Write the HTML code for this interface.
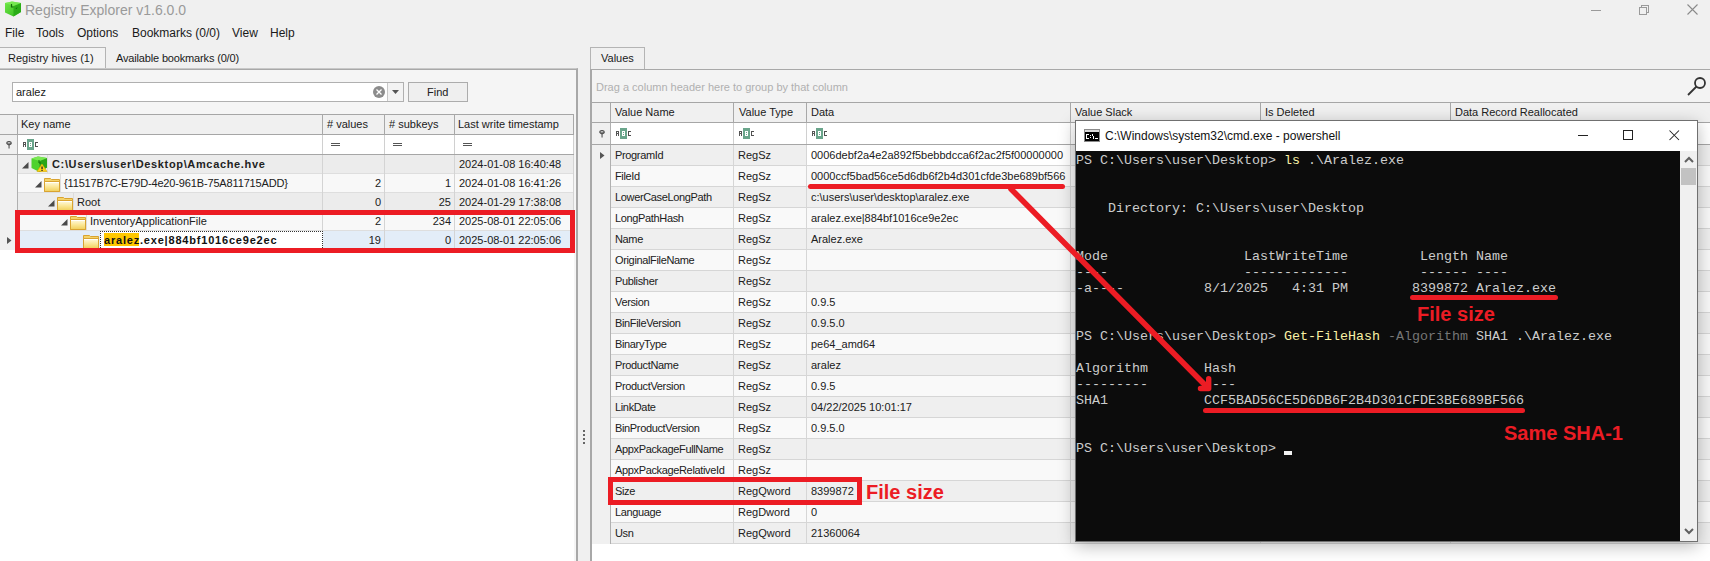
<!DOCTYPE html><html><head><meta charset="utf-8"><style>
*{margin:0;padding:0;box-sizing:border-box}
html,body{width:1710px;height:561px;overflow:hidden;background:#f0f0f0;font-family:"Liberation Sans",sans-serif;font-size:11px;color:#202020}
.ab{position:absolute}
.t{position:absolute;white-space:nowrap;line-height:1}
.m{position:absolute;white-space:pre;line-height:16px;font-family:"Liberation Mono",monospace;font-size:13.333px;color:#cccccc}
.hl{position:absolute;height:1px}
.vl{position:absolute;width:1px}
</style></head><body>
<svg class="ab" style="left:4px;top:0px" width="18" height="18" viewBox="0 0 18 18">
<defs><linearGradient id="gl" x1="0" y1="0" x2="1" y2="1"><stop offset="0" stop-color="#72e84a"/><stop offset="1" stop-color="#2fb81a"/></linearGradient></defs>
<polygon points="1,3 8,1.5 17,3 17,12 9.5,16.5 1,12.5" fill="url(#gl)"/>
<polygon points="9.5,6 17,3 17,12 9.5,16.5" fill="#27a815" opacity="0.85"/>
<polygon points="1,3 8,1.5 17,3 9.5,6" fill="#80ee5a" opacity="0.7"/>
<path d="M7.5 4 L7.5 7 L9.5 7" stroke="#136b0a" stroke-width="1.2" fill="none"/>
<path d="M13 7.5 L12 9" stroke="#136b0a" stroke-width="1" fill="none"/>
</svg>
<div class="t" style="left:25px;top:3px;font-size:14px;color:#9a9a9a">Registry Explorer v1.6.0.0</div>
<div class="ab" style="left:1591px;top:10px;width:10px;height:1px;background:#9a9a9a"></div>
<div class="ab" style="left:1641px;top:5px;width:8px;height:8px;border:1px solid #9a9a9a"></div>
<div class="ab" style="left:1639px;top:7px;width:8px;height:8px;border:1px solid #9a9a9a;background:#f0f0f0"></div>
<svg class="ab" style="left:1686px;top:3px" width="14" height="14"><path d="M1.5 1.5 L11.5 11.5 M11.5 1.5 L1.5 11.5" stroke="#8a8a8a" stroke-width="1.1"/></svg>
<div class="t" style="left:5px;top:27px;font-size:12px;color:#1a1a1a">File</div>
<div class="t" style="left:36px;top:27px;font-size:12px;color:#1a1a1a">Tools</div>
<div class="t" style="left:77px;top:27px;font-size:12px;color:#1a1a1a">Options</div>
<div class="t" style="left:132px;top:27px;font-size:12px;color:#1a1a1a">Bookmarks (0/0)</div>
<div class="t" style="left:232px;top:27px;font-size:12px;color:#1a1a1a">View</div>
<div class="t" style="left:270px;top:27px;font-size:12px;color:#1a1a1a">Help</div>
<div class="ab" style="left:0px;top:47px;width:106px;height:23px;background:#f3f3f3;border-top:1px solid #b4b4b4;border-right:1px solid #b4b4b4"></div>
<div class="t" style="left:8px;top:53px;color:#1a1a1a">Registry hives (1)</div>
<div class="t" style="left:116px;top:53px;color:#1a1a1a;letter-spacing:-0.16px">Available bookmarks (0/0)</div>
<div class="ab" style="left:0px;top:68px;width:578px;height:493px;background:#f5f5f5;border-top:1px solid #c8c8c8;border-right:2px solid #a8a8a8"></div>
<div class="ab" style="left:0px;top:69px;width:576px;height:1px;background:#a8a8a8"></div>
<div class="ab" style="left:12px;top:82px;width:392px;height:20px;background:#fff;border:1px solid #b0b0b0"></div>
<div class="ab" style="left:387px;top:83px;width:1px;height:18px;background:#c8c8c8"></div>
<div class="ab" style="left:388px;top:83px;width:15px;height:18px;background:#f3f3f3"></div>
<svg class="ab" style="left:372px;top:85px" width="14" height="14"><circle cx="7" cy="7" r="6" fill="#8c8c8c"/><path d="M4.5 4.5 L9.5 9.5 M9.5 4.5 L4.5 9.5" stroke="#fff" stroke-width="1.3"/></svg>
<svg class="ab" style="left:392px;top:90px" width="7" height="5"><polygon points="0,0 7,0 3.5,4" fill="#555"/></svg>
<div class="t" style="left:16px;top:87px;color:#202020">aralez</div>
<div class="ab" style="left:408px;top:82px;width:60px;height:20px;background:#efefef;border:1px solid #acacac"></div>
<div class="t" style="left:427px;top:87px;color:#202020">Find</div>
<div class="ab" style="left:0px;top:114px;width:574px;height:21px;background:#f0f0f0;border-top:1px solid #a6a6a6;border-bottom:1px solid #a6a6a6"></div>
<div class="ab" style="left:0px;top:135px;width:574px;height:20px;background:#fff;border-bottom:1px solid #a6a6a6"></div>
<div class="ab" style="left:0px;top:135px;width:17px;height:19px;background:#f0f0f0"></div>
<div class="ab" style="left:0px;top:155px;width:574px;height:406px;background:#fff"></div>
<div class="ab" style="left:0px;top:155px;width:17px;height:95px;background:#f0f0f0"></div>
<div class="ab" style="left:17px;top:114px;width:1px;height:21px;background:#a8a8a8"></div>
<div class="ab" style="left:17px;top:135px;width:1px;height:19px;background:#d0d0d0"></div>
<div class="ab" style="left:322px;top:114px;width:1px;height:21px;background:#a8a8a8"></div>
<div class="ab" style="left:322px;top:135px;width:1px;height:19px;background:#d0d0d0"></div>
<div class="ab" style="left:384px;top:114px;width:1px;height:21px;background:#a8a8a8"></div>
<div class="ab" style="left:384px;top:135px;width:1px;height:19px;background:#d0d0d0"></div>
<div class="ab" style="left:454px;top:114px;width:1px;height:21px;background:#a8a8a8"></div>
<div class="ab" style="left:454px;top:135px;width:1px;height:19px;background:#d0d0d0"></div>
<div class="ab" style="left:573px;top:114px;width:1px;height:21px;background:#a8a8a8"></div>
<div class="ab" style="left:573px;top:135px;width:1px;height:19px;background:#d0d0d0"></div>
<div class="ab" style="left:17px;top:135px;width:1px;height:19px;background:#b0b0b0"></div>
<div class="ab" style="left:17px;top:155px;width:1px;height:95px;background:#b0b0b0"></div>
<div class="t" style="left:21px;top:119px;color:#202020">Key name</div>
<div class="t" style="left:327px;top:119px;color:#202020"># values</div>
<div class="t" style="left:389px;top:119px;color:#202020"># subkeys</div>
<div class="t" style="left:458px;top:119px;color:#202020">Last write timestamp</div>
<svg class="ab" style="left:6px;top:141px" width="7" height="8"><ellipse cx="3" cy="2" rx="2.2" ry="1.4" fill="none" stroke="#555" stroke-width="1.3"/><path d="M0.8 2.5 L3 4.8 L5.2 2.5" fill="#555"/><rect x="2.5" y="4" width="1.1" height="3.5" fill="#555"/></svg>
<svg class="ab" style="left:23px;top:139px" width="16" height="11" shape-rendering="crispEdges"><path d="M0 3h3v1h-3zM0 4h1v4h-1zM2 4h1v4h-1zM1 5h1v1h-1z" fill="#555"/><rect x="4" y="0" width="7" height="11" fill="#6aa58b"/><rect x="6" y="3" width="3" height="5" fill="#fff"/><rect x="7" y="4" width="1" height="1" fill="#6aa58b"/><rect x="7" y="6" width="1" height="1" fill="#6aa58b"/><path d="M12 3h3v1h-3zM12 4h1v3h-1zM12 7h3v1h-3z" fill="#505050"/></svg>
<svg class="ab" style="left:331px;top:143px" width="9" height="4" shape-rendering="crispEdges"><rect x="0" y="0" width="9" height="1" fill="#555"/><rect x="0" y="2" width="9" height="1" fill="#555"/></svg>
<svg class="ab" style="left:393px;top:143px" width="9" height="4" shape-rendering="crispEdges"><rect x="0" y="0" width="9" height="1" fill="#555"/><rect x="0" y="2" width="9" height="1" fill="#555"/></svg>
<svg class="ab" style="left:463px;top:143px" width="9" height="4" shape-rendering="crispEdges"><rect x="0" y="0" width="9" height="1" fill="#555"/><rect x="0" y="2" width="9" height="1" fill="#555"/></svg>
<div class="ab" style="left:18px;top:155px;width:556px;height:19px;background:#ececec"></div>
<div class="ab" style="left:18px;top:173px;width:556px;height:1px;background:#dedede"></div>
<div class="ab" style="left:322px;top:155px;width:1px;height:19px;background:#d4d4d4"></div>
<div class="ab" style="left:384px;top:155px;width:1px;height:19px;background:#d4d4d4"></div>
<div class="ab" style="left:454px;top:155px;width:1px;height:19px;background:#d4d4d4"></div>
<div class="ab" style="left:573px;top:155px;width:1px;height:19px;background:#d4d4d4"></div>
<svg class="ab" style="left:22px;top:162px" width="7" height="7"><polygon points="6.5,0 6.5,6.5 0,6.5" fill="#4a4a4a"/></svg>
<div class="ab" style="left:47px;top:155px;width:1px;height:18px;background:#dcdcdc"></div>
<svg class="ab" style="left:31px;top:156px" width="17" height="17" viewBox="0 0 17 17"><polygon points="0.5,2.5 7,0.5 16,2 16,11.5 8.5,16 0.5,12" fill="#4fd22e"/><polygon points="8.5,5 16,2 16,11.5 8.5,16" fill="#2aa516"/><polygon points="0.5,2.5 7,0.5 16,2 8.5,5" fill="#7ae852"/><path d="M8 4 L8 7 L10 7" stroke="#136b0a" stroke-width="1" fill="none"/><polygon points="11,8 16,15.5 6,15.5" fill="#ffd21a" stroke="#d9a800" stroke-width="0.6"/><rect x="10.4" y="10.5" width="1.3" height="2.8" fill="#222"/><rect x="10.4" y="14" width="1.3" height="1" fill="#222"/></svg>
<div class="t" style="left:52px;top:159px;font-weight:bold;letter-spacing:0.65px;color:#222">C:\Users\user\Desktop\Amcache.hve</div>
<div class="t" style="left:459px;top:159px;color:#202020">2024-01-08 16:40:48</div>
<div class="ab" style="left:18px;top:174px;width:556px;height:19px;background:#f8f8f8"></div>
<div class="ab" style="left:18px;top:192px;width:556px;height:1px;background:#dedede"></div>
<div class="ab" style="left:322px;top:174px;width:1px;height:19px;background:#d4d4d4"></div>
<div class="ab" style="left:384px;top:174px;width:1px;height:19px;background:#d4d4d4"></div>
<div class="ab" style="left:454px;top:174px;width:1px;height:19px;background:#d4d4d4"></div>
<div class="ab" style="left:573px;top:174px;width:1px;height:19px;background:#d4d4d4"></div>
<svg class="ab" style="left:35px;top:181px" width="7" height="7"><polygon points="6.5,0 6.5,6.5 0,6.5" fill="#4a4a4a"/></svg>
<div class="ab" style="left:60px;top:174px;width:1px;height:18px;background:#dcdcdc"></div>
<svg class="ab" style="left:44px;top:178px" width="17" height="14" viewBox="0 0 17 14"><defs><linearGradient id="fg44" x1="0" y1="0" x2="0" y2="1"><stop offset="0" stop-color="#fffbe6"/><stop offset="0.5" stop-color="#fbe89a"/><stop offset="1" stop-color="#f0cf5a"/></linearGradient></defs><path d="M0.5 0.5 H6.5 L7.5 1.5 H15.5 V13.5 H0.5 Z" fill="#f4d36a" stroke="#d9a331"/><path d="M0.5 3.5 H15.5 V13.5 H0.5 Z" fill="url(#fg44)" stroke="#d9a331"/><rect x="1" y="4" width="14" height="1" fill="#ffffff" opacity="0.9"/></svg>
<div class="t" style="left:64px;top:178px;color:#202020;letter-spacing:-0.15px">{11517B7C-E79D-4e20-961B-75A811715ADD}</div>
<div class="t" style="left:322px;top:178px;width:59px;text-align:right;color:#202020">2</div>
<div class="t" style="left:384px;top:178px;width:67px;text-align:right;color:#202020">1</div>
<div class="t" style="left:459px;top:178px;color:#202020">2024-01-08 16:41:26</div>
<div class="ab" style="left:18px;top:193px;width:556px;height:19px;background:#ececec"></div>
<div class="ab" style="left:18px;top:211px;width:556px;height:1px;background:#dedede"></div>
<div class="ab" style="left:322px;top:193px;width:1px;height:19px;background:#d4d4d4"></div>
<div class="ab" style="left:384px;top:193px;width:1px;height:19px;background:#d4d4d4"></div>
<div class="ab" style="left:454px;top:193px;width:1px;height:19px;background:#d4d4d4"></div>
<div class="ab" style="left:573px;top:193px;width:1px;height:19px;background:#d4d4d4"></div>
<svg class="ab" style="left:48px;top:200px" width="7" height="7"><polygon points="6.5,0 6.5,6.5 0,6.5" fill="#4a4a4a"/></svg>
<div class="ab" style="left:73px;top:193px;width:1px;height:18px;background:#dcdcdc"></div>
<svg class="ab" style="left:57px;top:197px" width="17" height="14" viewBox="0 0 17 14"><defs><linearGradient id="fg57" x1="0" y1="0" x2="0" y2="1"><stop offset="0" stop-color="#fffbe6"/><stop offset="0.5" stop-color="#fbe89a"/><stop offset="1" stop-color="#f0cf5a"/></linearGradient></defs><path d="M0.5 0.5 H6.5 L7.5 1.5 H15.5 V13.5 H0.5 Z" fill="#f4d36a" stroke="#d9a331"/><path d="M0.5 3.5 H15.5 V13.5 H0.5 Z" fill="url(#fg57)" stroke="#d9a331"/><rect x="1" y="4" width="14" height="1" fill="#ffffff" opacity="0.9"/></svg>
<div class="t" style="left:77px;top:197px;color:#202020">Root</div>
<div class="t" style="left:322px;top:197px;width:59px;text-align:right;color:#202020">0</div>
<div class="t" style="left:384px;top:197px;width:67px;text-align:right;color:#202020">25</div>
<div class="t" style="left:459px;top:197px;color:#202020">2024-01-29 17:38:08</div>
<div class="ab" style="left:18px;top:212px;width:556px;height:19px;background:#f8f8f8"></div>
<div class="ab" style="left:18px;top:230px;width:556px;height:1px;background:#dedede"></div>
<div class="ab" style="left:322px;top:212px;width:1px;height:19px;background:#d4d4d4"></div>
<div class="ab" style="left:384px;top:212px;width:1px;height:19px;background:#d4d4d4"></div>
<div class="ab" style="left:454px;top:212px;width:1px;height:19px;background:#d4d4d4"></div>
<div class="ab" style="left:573px;top:212px;width:1px;height:19px;background:#d4d4d4"></div>
<svg class="ab" style="left:61px;top:219px" width="7" height="7"><polygon points="6.5,0 6.5,6.5 0,6.5" fill="#4a4a4a"/></svg>
<div class="ab" style="left:86px;top:212px;width:1px;height:18px;background:#dcdcdc"></div>
<svg class="ab" style="left:70px;top:216px" width="17" height="14" viewBox="0 0 17 14"><defs><linearGradient id="fg70" x1="0" y1="0" x2="0" y2="1"><stop offset="0" stop-color="#fffbe6"/><stop offset="0.5" stop-color="#fbe89a"/><stop offset="1" stop-color="#f0cf5a"/></linearGradient></defs><path d="M0.5 0.5 H6.5 L7.5 1.5 H15.5 V13.5 H0.5 Z" fill="#f4d36a" stroke="#d9a331"/><path d="M0.5 3.5 H15.5 V13.5 H0.5 Z" fill="url(#fg70)" stroke="#d9a331"/><rect x="1" y="4" width="14" height="1" fill="#ffffff" opacity="0.9"/></svg>
<div class="t" style="left:90px;top:216px;color:#202020">InventoryApplicationFile</div>
<div class="t" style="left:322px;top:216px;width:59px;text-align:right;color:#202020">2</div>
<div class="t" style="left:384px;top:216px;width:67px;text-align:right;color:#202020">234</div>
<div class="t" style="left:459px;top:216px;color:#202020">2025-08-01 22:05:06</div>
<div class="ab" style="left:18px;top:231px;width:556px;height:19px;background:#e3edf8"></div>
<div class="ab" style="left:18px;top:249px;width:556px;height:1px;background:#dedede"></div>
<div class="ab" style="left:322px;top:231px;width:1px;height:19px;background:#d4d4d4"></div>
<div class="ab" style="left:384px;top:231px;width:1px;height:19px;background:#d4d4d4"></div>
<div class="ab" style="left:454px;top:231px;width:1px;height:19px;background:#d4d4d4"></div>
<div class="ab" style="left:573px;top:231px;width:1px;height:19px;background:#d4d4d4"></div>
<svg class="ab" style="left:83px;top:235px" width="17" height="14" viewBox="0 0 17 14"><defs><linearGradient id="fg83" x1="0" y1="0" x2="0" y2="1"><stop offset="0" stop-color="#fffbe6"/><stop offset="0.5" stop-color="#fbe89a"/><stop offset="1" stop-color="#f0cf5a"/></linearGradient></defs><path d="M0.5 0.5 H6.5 L7.5 1.5 H15.5 V13.5 H0.5 Z" fill="#f4d36a" stroke="#d9a331"/><path d="M0.5 3.5 H15.5 V13.5 H0.5 Z" fill="url(#fg83)" stroke="#d9a331"/><rect x="1" y="4" width="14" height="1" fill="#ffffff" opacity="0.9"/></svg>
<div class="ab" style="left:100px;top:231px;width:223px;height:19px;background:#fff;border:1px dotted #333"></div>
<div class="ab" style="left:104px;top:233px;width:35px;height:13px;background:#ffc800"></div>
<div class="t" style="left:104px;top:235px;font-weight:bold;letter-spacing:0.8px;color:#111">aralez.exe|884bf1016ce9e2ec</div>
<div class="t" style="left:322px;top:235px;width:59px;text-align:right;color:#202020">19</div>
<div class="t" style="left:384px;top:235px;width:67px;text-align:right;color:#202020">0</div>
<div class="t" style="left:459px;top:235px;color:#202020">2025-08-01 22:05:06</div>
<svg class="ab" style="left:7px;top:237px" width="5" height="8"><polygon points="0,0 4.5,3.5 0,7" fill="#555"/></svg>
<div class="ab" style="left:583px;top:430px;width:2px;height:2px;background:#666"></div>
<div class="ab" style="left:583px;top:434px;width:2px;height:2px;background:#666"></div>
<div class="ab" style="left:583px;top:438px;width:2px;height:2px;background:#666"></div>
<div class="ab" style="left:583px;top:442px;width:2px;height:2px;background:#666"></div>
<div class="ab" style="left:590px;top:47px;width:55px;height:23px;background:#f0f0f0;border-top:1px solid #b4b4b4;border-left:1px solid #b4b4b4;border-right:1px solid #b4b4b4"></div>
<div class="t" style="left:601px;top:53px;color:#1a1a1a">Values</div>
<div class="ab" style="left:590px;top:69px;width:1120px;height:492px;background:#fff;border-top:1px solid #a8a8a8;border-left:2px solid #a8a8a8"></div>
<div class="ab" style="left:592px;top:70px;width:1118px;height:33px;background:#f3f3f3;border-bottom:1px solid #a6a6a6"></div>
<div class="t" style="left:596px;top:82px;color:#b0b0b0">Drag a column header here to group by that column</div>
<svg class="ab" style="left:1685px;top:75px" width="22" height="22"><circle cx="15" cy="8" r="5" fill="none" stroke="#333" stroke-width="1.8"/><path d="M11.5 11.5 L3 20" stroke="#333" stroke-width="1.8"/></svg>
<div class="ab" style="left:592px;top:103px;width:1118px;height:20px;background:#f0f0f0;border-bottom:1px solid #a6a6a6"></div>
<div class="ab" style="left:592px;top:123px;width:1118px;height:22px;background:#fff;border-bottom:1px solid #a6a6a6"></div>
<div class="ab" style="left:592px;top:123px;width:18px;height:21px;background:#f0f0f0"></div>
<div class="ab" style="left:610px;top:103px;width:1px;height:20px;background:#a8a8a8"></div>
<div class="ab" style="left:610px;top:123px;width:1px;height:21px;background:#d0d0d0"></div>
<div class="ab" style="left:733px;top:103px;width:1px;height:20px;background:#a8a8a8"></div>
<div class="ab" style="left:733px;top:123px;width:1px;height:21px;background:#d0d0d0"></div>
<div class="ab" style="left:806px;top:103px;width:1px;height:20px;background:#a8a8a8"></div>
<div class="ab" style="left:806px;top:123px;width:1px;height:21px;background:#d0d0d0"></div>
<div class="ab" style="left:1070px;top:103px;width:1px;height:20px;background:#a8a8a8"></div>
<div class="ab" style="left:1070px;top:123px;width:1px;height:21px;background:#d0d0d0"></div>
<div class="ab" style="left:1260px;top:103px;width:1px;height:20px;background:#a8a8a8"></div>
<div class="ab" style="left:1260px;top:123px;width:1px;height:21px;background:#d0d0d0"></div>
<div class="ab" style="left:1450px;top:103px;width:1px;height:20px;background:#a8a8a8"></div>
<div class="ab" style="left:1450px;top:123px;width:1px;height:21px;background:#d0d0d0"></div>
<div class="ab" style="left:610px;top:123px;width:1px;height:21px;background:#b0b0b0"></div>
<div class="t" style="left:615px;top:107px;color:#202020">Value Name</div>
<div class="t" style="left:739px;top:107px;color:#202020">Value Type</div>
<div class="t" style="left:811px;top:107px;color:#202020">Data</div>
<div class="t" style="left:1075px;top:107px;color:#202020">Value Slack</div>
<div class="t" style="left:1265px;top:107px;color:#202020">Is Deleted</div>
<div class="t" style="left:1455px;top:107px;color:#202020">Data Record Reallocated</div>
<svg class="ab" style="left:599px;top:130px" width="7" height="8"><ellipse cx="3" cy="2" rx="2.2" ry="1.4" fill="none" stroke="#555" stroke-width="1.3"/><path d="M0.8 2.5 L3 4.8 L5.2 2.5" fill="#555"/><rect x="2.5" y="4" width="1.1" height="3.5" fill="#555"/></svg>
<svg class="ab" style="left:616px;top:128px" width="16" height="11" shape-rendering="crispEdges"><path d="M0 3h3v1h-3zM0 4h1v4h-1zM2 4h1v4h-1zM1 5h1v1h-1z" fill="#555"/><rect x="4" y="0" width="7" height="11" fill="#6aa58b"/><rect x="6" y="3" width="3" height="5" fill="#fff"/><rect x="7" y="4" width="1" height="1" fill="#6aa58b"/><rect x="7" y="6" width="1" height="1" fill="#6aa58b"/><path d="M12 3h3v1h-3zM12 4h1v3h-1zM12 7h3v1h-3z" fill="#505050"/></svg>
<svg class="ab" style="left:739px;top:128px" width="16" height="11" shape-rendering="crispEdges"><path d="M0 3h3v1h-3zM0 4h1v4h-1zM2 4h1v4h-1zM1 5h1v1h-1z" fill="#555"/><rect x="4" y="0" width="7" height="11" fill="#6aa58b"/><rect x="6" y="3" width="3" height="5" fill="#fff"/><rect x="7" y="4" width="1" height="1" fill="#6aa58b"/><rect x="7" y="6" width="1" height="1" fill="#6aa58b"/><path d="M12 3h3v1h-3zM12 4h1v3h-1zM12 7h3v1h-3z" fill="#505050"/></svg>
<svg class="ab" style="left:812px;top:128px" width="16" height="11" shape-rendering="crispEdges"><path d="M0 3h3v1h-3zM0 4h1v4h-1zM2 4h1v4h-1zM1 5h1v1h-1z" fill="#555"/><rect x="4" y="0" width="7" height="11" fill="#6aa58b"/><rect x="6" y="3" width="3" height="5" fill="#fff"/><rect x="7" y="4" width="1" height="1" fill="#6aa58b"/><rect x="7" y="6" width="1" height="1" fill="#6aa58b"/><path d="M12 3h3v1h-3zM12 4h1v3h-1zM12 7h3v1h-3z" fill="#505050"/></svg>
<div class="ab" style="left:592px;top:145px;width:18px;height:399px;background:#f0f0f0"></div>
<div class="ab" style="left:611px;top:145px;width:1099px;height:21px;background:#efefef"></div>
<div class="ab" style="left:807px;top:145px;width:263px;height:21px;background:#fff"></div>
<div class="ab" style="left:611px;top:165px;width:1099px;height:1px;background:#d6d6d6"></div>
<div class="ab" style="left:733px;top:145px;width:1px;height:21px;background:#d6d6d6"></div>
<div class="ab" style="left:806px;top:145px;width:1px;height:21px;background:#d6d6d6"></div>
<div class="ab" style="left:1070px;top:145px;width:1px;height:21px;background:#d6d6d6"></div>
<div class="ab" style="left:1260px;top:145px;width:1px;height:21px;background:#d6d6d6"></div>
<div class="ab" style="left:1450px;top:145px;width:1px;height:21px;background:#d6d6d6"></div>
<div class="t" style="left:615px;top:150px;color:#202020;letter-spacing:-0.35px">ProgramId</div>
<div class="t" style="left:738px;top:150px;color:#202020">RegSz</div>
<div class="t" style="left:811px;top:150px;color:#202020">0006debf2a4e2a892f5bebbdcca6f2ac2f5f00000000</div>
<div class="ab" style="left:611px;top:166px;width:1099px;height:21px;background:#f9f9f9"></div>
<div class="ab" style="left:611px;top:186px;width:1099px;height:1px;background:#d6d6d6"></div>
<div class="ab" style="left:733px;top:166px;width:1px;height:21px;background:#d6d6d6"></div>
<div class="ab" style="left:806px;top:166px;width:1px;height:21px;background:#d6d6d6"></div>
<div class="ab" style="left:1070px;top:166px;width:1px;height:21px;background:#d6d6d6"></div>
<div class="ab" style="left:1260px;top:166px;width:1px;height:21px;background:#d6d6d6"></div>
<div class="ab" style="left:1450px;top:166px;width:1px;height:21px;background:#d6d6d6"></div>
<div class="t" style="left:615px;top:171px;color:#202020;letter-spacing:-0.35px">FileId</div>
<div class="t" style="left:738px;top:171px;color:#202020">RegSz</div>
<div class="t" style="left:811px;top:171px;color:#202020">0000ccf5bad56ce5d6db6f2b4d301cfde3be689bf566</div>
<div class="ab" style="left:611px;top:187px;width:1099px;height:21px;background:#efefef"></div>
<div class="ab" style="left:611px;top:207px;width:1099px;height:1px;background:#d6d6d6"></div>
<div class="ab" style="left:733px;top:187px;width:1px;height:21px;background:#d6d6d6"></div>
<div class="ab" style="left:806px;top:187px;width:1px;height:21px;background:#d6d6d6"></div>
<div class="ab" style="left:1070px;top:187px;width:1px;height:21px;background:#d6d6d6"></div>
<div class="ab" style="left:1260px;top:187px;width:1px;height:21px;background:#d6d6d6"></div>
<div class="ab" style="left:1450px;top:187px;width:1px;height:21px;background:#d6d6d6"></div>
<div class="t" style="left:615px;top:192px;color:#202020;letter-spacing:-0.35px">LowerCaseLongPath</div>
<div class="t" style="left:738px;top:192px;color:#202020">RegSz</div>
<div class="t" style="left:811px;top:192px;color:#202020">c:\users\user\desktop\aralez.exe</div>
<div class="ab" style="left:611px;top:208px;width:1099px;height:21px;background:#f9f9f9"></div>
<div class="ab" style="left:611px;top:228px;width:1099px;height:1px;background:#d6d6d6"></div>
<div class="ab" style="left:733px;top:208px;width:1px;height:21px;background:#d6d6d6"></div>
<div class="ab" style="left:806px;top:208px;width:1px;height:21px;background:#d6d6d6"></div>
<div class="ab" style="left:1070px;top:208px;width:1px;height:21px;background:#d6d6d6"></div>
<div class="ab" style="left:1260px;top:208px;width:1px;height:21px;background:#d6d6d6"></div>
<div class="ab" style="left:1450px;top:208px;width:1px;height:21px;background:#d6d6d6"></div>
<div class="t" style="left:615px;top:213px;color:#202020;letter-spacing:-0.35px">LongPathHash</div>
<div class="t" style="left:738px;top:213px;color:#202020">RegSz</div>
<div class="t" style="left:811px;top:213px;color:#202020">aralez.exe|884bf1016ce9e2ec</div>
<div class="ab" style="left:611px;top:229px;width:1099px;height:21px;background:#efefef"></div>
<div class="ab" style="left:611px;top:249px;width:1099px;height:1px;background:#d6d6d6"></div>
<div class="ab" style="left:733px;top:229px;width:1px;height:21px;background:#d6d6d6"></div>
<div class="ab" style="left:806px;top:229px;width:1px;height:21px;background:#d6d6d6"></div>
<div class="ab" style="left:1070px;top:229px;width:1px;height:21px;background:#d6d6d6"></div>
<div class="ab" style="left:1260px;top:229px;width:1px;height:21px;background:#d6d6d6"></div>
<div class="ab" style="left:1450px;top:229px;width:1px;height:21px;background:#d6d6d6"></div>
<div class="t" style="left:615px;top:234px;color:#202020;letter-spacing:-0.35px">Name</div>
<div class="t" style="left:738px;top:234px;color:#202020">RegSz</div>
<div class="t" style="left:811px;top:234px;color:#202020">Aralez.exe</div>
<div class="ab" style="left:611px;top:250px;width:1099px;height:21px;background:#f9f9f9"></div>
<div class="ab" style="left:611px;top:270px;width:1099px;height:1px;background:#d6d6d6"></div>
<div class="ab" style="left:733px;top:250px;width:1px;height:21px;background:#d6d6d6"></div>
<div class="ab" style="left:806px;top:250px;width:1px;height:21px;background:#d6d6d6"></div>
<div class="ab" style="left:1070px;top:250px;width:1px;height:21px;background:#d6d6d6"></div>
<div class="ab" style="left:1260px;top:250px;width:1px;height:21px;background:#d6d6d6"></div>
<div class="ab" style="left:1450px;top:250px;width:1px;height:21px;background:#d6d6d6"></div>
<div class="t" style="left:615px;top:255px;color:#202020;letter-spacing:-0.35px">OriginalFileName</div>
<div class="t" style="left:738px;top:255px;color:#202020">RegSz</div>
<div class="t" style="left:811px;top:255px;color:#202020"></div>
<div class="ab" style="left:611px;top:271px;width:1099px;height:21px;background:#efefef"></div>
<div class="ab" style="left:611px;top:291px;width:1099px;height:1px;background:#d6d6d6"></div>
<div class="ab" style="left:733px;top:271px;width:1px;height:21px;background:#d6d6d6"></div>
<div class="ab" style="left:806px;top:271px;width:1px;height:21px;background:#d6d6d6"></div>
<div class="ab" style="left:1070px;top:271px;width:1px;height:21px;background:#d6d6d6"></div>
<div class="ab" style="left:1260px;top:271px;width:1px;height:21px;background:#d6d6d6"></div>
<div class="ab" style="left:1450px;top:271px;width:1px;height:21px;background:#d6d6d6"></div>
<div class="t" style="left:615px;top:276px;color:#202020;letter-spacing:-0.35px">Publisher</div>
<div class="t" style="left:738px;top:276px;color:#202020">RegSz</div>
<div class="t" style="left:811px;top:276px;color:#202020"></div>
<div class="ab" style="left:611px;top:292px;width:1099px;height:21px;background:#f9f9f9"></div>
<div class="ab" style="left:611px;top:312px;width:1099px;height:1px;background:#d6d6d6"></div>
<div class="ab" style="left:733px;top:292px;width:1px;height:21px;background:#d6d6d6"></div>
<div class="ab" style="left:806px;top:292px;width:1px;height:21px;background:#d6d6d6"></div>
<div class="ab" style="left:1070px;top:292px;width:1px;height:21px;background:#d6d6d6"></div>
<div class="ab" style="left:1260px;top:292px;width:1px;height:21px;background:#d6d6d6"></div>
<div class="ab" style="left:1450px;top:292px;width:1px;height:21px;background:#d6d6d6"></div>
<div class="t" style="left:615px;top:297px;color:#202020;letter-spacing:-0.35px">Version</div>
<div class="t" style="left:738px;top:297px;color:#202020">RegSz</div>
<div class="t" style="left:811px;top:297px;color:#202020">0.9.5</div>
<div class="ab" style="left:611px;top:313px;width:1099px;height:21px;background:#efefef"></div>
<div class="ab" style="left:611px;top:333px;width:1099px;height:1px;background:#d6d6d6"></div>
<div class="ab" style="left:733px;top:313px;width:1px;height:21px;background:#d6d6d6"></div>
<div class="ab" style="left:806px;top:313px;width:1px;height:21px;background:#d6d6d6"></div>
<div class="ab" style="left:1070px;top:313px;width:1px;height:21px;background:#d6d6d6"></div>
<div class="ab" style="left:1260px;top:313px;width:1px;height:21px;background:#d6d6d6"></div>
<div class="ab" style="left:1450px;top:313px;width:1px;height:21px;background:#d6d6d6"></div>
<div class="t" style="left:615px;top:318px;color:#202020;letter-spacing:-0.35px">BinFileVersion</div>
<div class="t" style="left:738px;top:318px;color:#202020">RegSz</div>
<div class="t" style="left:811px;top:318px;color:#202020">0.9.5.0</div>
<div class="ab" style="left:611px;top:334px;width:1099px;height:21px;background:#f9f9f9"></div>
<div class="ab" style="left:611px;top:354px;width:1099px;height:1px;background:#d6d6d6"></div>
<div class="ab" style="left:733px;top:334px;width:1px;height:21px;background:#d6d6d6"></div>
<div class="ab" style="left:806px;top:334px;width:1px;height:21px;background:#d6d6d6"></div>
<div class="ab" style="left:1070px;top:334px;width:1px;height:21px;background:#d6d6d6"></div>
<div class="ab" style="left:1260px;top:334px;width:1px;height:21px;background:#d6d6d6"></div>
<div class="ab" style="left:1450px;top:334px;width:1px;height:21px;background:#d6d6d6"></div>
<div class="t" style="left:615px;top:339px;color:#202020;letter-spacing:-0.35px">BinaryType</div>
<div class="t" style="left:738px;top:339px;color:#202020">RegSz</div>
<div class="t" style="left:811px;top:339px;color:#202020">pe64_amd64</div>
<div class="ab" style="left:611px;top:355px;width:1099px;height:21px;background:#efefef"></div>
<div class="ab" style="left:611px;top:375px;width:1099px;height:1px;background:#d6d6d6"></div>
<div class="ab" style="left:733px;top:355px;width:1px;height:21px;background:#d6d6d6"></div>
<div class="ab" style="left:806px;top:355px;width:1px;height:21px;background:#d6d6d6"></div>
<div class="ab" style="left:1070px;top:355px;width:1px;height:21px;background:#d6d6d6"></div>
<div class="ab" style="left:1260px;top:355px;width:1px;height:21px;background:#d6d6d6"></div>
<div class="ab" style="left:1450px;top:355px;width:1px;height:21px;background:#d6d6d6"></div>
<div class="t" style="left:615px;top:360px;color:#202020;letter-spacing:-0.35px">ProductName</div>
<div class="t" style="left:738px;top:360px;color:#202020">RegSz</div>
<div class="t" style="left:811px;top:360px;color:#202020">aralez</div>
<div class="ab" style="left:611px;top:376px;width:1099px;height:21px;background:#f9f9f9"></div>
<div class="ab" style="left:611px;top:396px;width:1099px;height:1px;background:#d6d6d6"></div>
<div class="ab" style="left:733px;top:376px;width:1px;height:21px;background:#d6d6d6"></div>
<div class="ab" style="left:806px;top:376px;width:1px;height:21px;background:#d6d6d6"></div>
<div class="ab" style="left:1070px;top:376px;width:1px;height:21px;background:#d6d6d6"></div>
<div class="ab" style="left:1260px;top:376px;width:1px;height:21px;background:#d6d6d6"></div>
<div class="ab" style="left:1450px;top:376px;width:1px;height:21px;background:#d6d6d6"></div>
<div class="t" style="left:615px;top:381px;color:#202020;letter-spacing:-0.35px">ProductVersion</div>
<div class="t" style="left:738px;top:381px;color:#202020">RegSz</div>
<div class="t" style="left:811px;top:381px;color:#202020">0.9.5</div>
<div class="ab" style="left:611px;top:397px;width:1099px;height:21px;background:#efefef"></div>
<div class="ab" style="left:611px;top:417px;width:1099px;height:1px;background:#d6d6d6"></div>
<div class="ab" style="left:733px;top:397px;width:1px;height:21px;background:#d6d6d6"></div>
<div class="ab" style="left:806px;top:397px;width:1px;height:21px;background:#d6d6d6"></div>
<div class="ab" style="left:1070px;top:397px;width:1px;height:21px;background:#d6d6d6"></div>
<div class="ab" style="left:1260px;top:397px;width:1px;height:21px;background:#d6d6d6"></div>
<div class="ab" style="left:1450px;top:397px;width:1px;height:21px;background:#d6d6d6"></div>
<div class="t" style="left:615px;top:402px;color:#202020;letter-spacing:-0.35px">LinkDate</div>
<div class="t" style="left:738px;top:402px;color:#202020">RegSz</div>
<div class="t" style="left:811px;top:402px;color:#202020">04/22/2025 10:01:17</div>
<div class="ab" style="left:611px;top:418px;width:1099px;height:21px;background:#f9f9f9"></div>
<div class="ab" style="left:611px;top:438px;width:1099px;height:1px;background:#d6d6d6"></div>
<div class="ab" style="left:733px;top:418px;width:1px;height:21px;background:#d6d6d6"></div>
<div class="ab" style="left:806px;top:418px;width:1px;height:21px;background:#d6d6d6"></div>
<div class="ab" style="left:1070px;top:418px;width:1px;height:21px;background:#d6d6d6"></div>
<div class="ab" style="left:1260px;top:418px;width:1px;height:21px;background:#d6d6d6"></div>
<div class="ab" style="left:1450px;top:418px;width:1px;height:21px;background:#d6d6d6"></div>
<div class="t" style="left:615px;top:423px;color:#202020;letter-spacing:-0.35px">BinProductVersion</div>
<div class="t" style="left:738px;top:423px;color:#202020">RegSz</div>
<div class="t" style="left:811px;top:423px;color:#202020">0.9.5.0</div>
<div class="ab" style="left:611px;top:439px;width:1099px;height:21px;background:#efefef"></div>
<div class="ab" style="left:611px;top:459px;width:1099px;height:1px;background:#d6d6d6"></div>
<div class="ab" style="left:733px;top:439px;width:1px;height:21px;background:#d6d6d6"></div>
<div class="ab" style="left:806px;top:439px;width:1px;height:21px;background:#d6d6d6"></div>
<div class="ab" style="left:1070px;top:439px;width:1px;height:21px;background:#d6d6d6"></div>
<div class="ab" style="left:1260px;top:439px;width:1px;height:21px;background:#d6d6d6"></div>
<div class="ab" style="left:1450px;top:439px;width:1px;height:21px;background:#d6d6d6"></div>
<div class="t" style="left:615px;top:444px;color:#202020;letter-spacing:-0.35px">AppxPackageFullName</div>
<div class="t" style="left:738px;top:444px;color:#202020">RegSz</div>
<div class="t" style="left:811px;top:444px;color:#202020"></div>
<div class="ab" style="left:611px;top:460px;width:1099px;height:21px;background:#f9f9f9"></div>
<div class="ab" style="left:611px;top:480px;width:1099px;height:1px;background:#d6d6d6"></div>
<div class="ab" style="left:733px;top:460px;width:1px;height:21px;background:#d6d6d6"></div>
<div class="ab" style="left:806px;top:460px;width:1px;height:21px;background:#d6d6d6"></div>
<div class="ab" style="left:1070px;top:460px;width:1px;height:21px;background:#d6d6d6"></div>
<div class="ab" style="left:1260px;top:460px;width:1px;height:21px;background:#d6d6d6"></div>
<div class="ab" style="left:1450px;top:460px;width:1px;height:21px;background:#d6d6d6"></div>
<div class="t" style="left:615px;top:465px;color:#202020;letter-spacing:-0.35px">AppxPackageRelativeId</div>
<div class="t" style="left:738px;top:465px;color:#202020">RegSz</div>
<div class="t" style="left:811px;top:465px;color:#202020"></div>
<div class="ab" style="left:611px;top:481px;width:1099px;height:21px;background:#efefef"></div>
<div class="ab" style="left:611px;top:501px;width:1099px;height:1px;background:#d6d6d6"></div>
<div class="ab" style="left:733px;top:481px;width:1px;height:21px;background:#d6d6d6"></div>
<div class="ab" style="left:806px;top:481px;width:1px;height:21px;background:#d6d6d6"></div>
<div class="ab" style="left:1070px;top:481px;width:1px;height:21px;background:#d6d6d6"></div>
<div class="ab" style="left:1260px;top:481px;width:1px;height:21px;background:#d6d6d6"></div>
<div class="ab" style="left:1450px;top:481px;width:1px;height:21px;background:#d6d6d6"></div>
<div class="t" style="left:615px;top:486px;color:#202020;letter-spacing:-0.35px">Size</div>
<div class="t" style="left:738px;top:486px;color:#202020">RegQword</div>
<div class="t" style="left:811px;top:486px;color:#202020">8399872</div>
<div class="ab" style="left:611px;top:502px;width:1099px;height:21px;background:#f9f9f9"></div>
<div class="ab" style="left:611px;top:522px;width:1099px;height:1px;background:#d6d6d6"></div>
<div class="ab" style="left:733px;top:502px;width:1px;height:21px;background:#d6d6d6"></div>
<div class="ab" style="left:806px;top:502px;width:1px;height:21px;background:#d6d6d6"></div>
<div class="ab" style="left:1070px;top:502px;width:1px;height:21px;background:#d6d6d6"></div>
<div class="ab" style="left:1260px;top:502px;width:1px;height:21px;background:#d6d6d6"></div>
<div class="ab" style="left:1450px;top:502px;width:1px;height:21px;background:#d6d6d6"></div>
<div class="t" style="left:615px;top:507px;color:#202020;letter-spacing:-0.35px">Language</div>
<div class="t" style="left:738px;top:507px;color:#202020">RegDword</div>
<div class="t" style="left:811px;top:507px;color:#202020">0</div>
<div class="ab" style="left:611px;top:523px;width:1099px;height:21px;background:#efefef"></div>
<div class="ab" style="left:611px;top:543px;width:1099px;height:1px;background:#d6d6d6"></div>
<div class="ab" style="left:733px;top:523px;width:1px;height:21px;background:#d6d6d6"></div>
<div class="ab" style="left:806px;top:523px;width:1px;height:21px;background:#d6d6d6"></div>
<div class="ab" style="left:1070px;top:523px;width:1px;height:21px;background:#d6d6d6"></div>
<div class="ab" style="left:1260px;top:523px;width:1px;height:21px;background:#d6d6d6"></div>
<div class="ab" style="left:1450px;top:523px;width:1px;height:21px;background:#d6d6d6"></div>
<div class="t" style="left:615px;top:528px;color:#202020;letter-spacing:-0.35px">Usn</div>
<div class="t" style="left:738px;top:528px;color:#202020">RegQword</div>
<div class="t" style="left:811px;top:528px;color:#202020">21360064</div>
<div class="ab" style="left:610px;top:145px;width:1px;height:399px;background:#b0b0b0"></div>
<svg class="ab" style="left:600px;top:152px" width="5" height="8"><polygon points="0,0 4.5,3.5 0,7" fill="#555"/></svg>
<div class="ab" style="left:1075px;top:120px;width:623px;height:422px;box-shadow:0 4px 16px rgba(0,0,0,0.28)"></div>
<div class="ab" style="left:1075px;top:120px;width:623px;height:422px;background:#fff;border:1px solid #707070"></div>
<svg class="ab" style="left:1084px;top:129px" width="17" height="14" shape-rendering="crispEdges"><rect x="0" y="0" width="16" height="13" fill="#8a8a8a"/><rect x="1" y="1" width="14" height="2" fill="#d8d8d8"/><rect x="1" y="3" width="14" height="9" fill="#000"/><path d="M2 5h3v1h-3zM2 6h1v3h-1zM2 9h3v1h-3zM6 6h1v1h-1zM6 8h1v1h-1zM8 5h1v2h-1zM9 7h1v3h-1zM11 9h3v1h-3z" fill="#fff"/></svg>
<div class="t" style="left:1105px;top:130px;font-size:12px;color:#111">C:\Windows\system32\cmd.exe - powershell</div>
<div class="ab" style="left:1578px;top:135px;width:10px;height:1px;background:#222"></div>
<div class="ab" style="left:1623px;top:130px;width:10px;height:10px;border:1px solid #222"></div>
<svg class="ab" style="left:1669px;top:130px" width="11" height="11"><path d="M0.5 0.5 L10 10 M10 0.5 L0.5 10" stroke="#222" stroke-width="1.05"/></svg>
<div class="ab" style="left:1076px;top:151px;width:604px;height:390px;background:#0c0c0c"></div>
<div class="ab" style="left:1680px;top:151px;width:17px;height:390px;background:#f0f0f0"></div>
<div class="ab" style="left:1681px;top:168px;width:15px;height:17px;background:#c2c2c2"></div>
<svg class="ab" style="left:1684px;top:156px" width="10" height="7"><path d="M1 6 L5 2 L9 6" stroke="#606060" stroke-width="2" fill="none"/></svg>
<svg class="ab" style="left:1684px;top:528px" width="10" height="7"><path d="M1 1 L5 5 L9 1" stroke="#606060" stroke-width="2" fill="none"/></svg>
<div class="m" style="left:1076px;top:153px">PS C:\Users\user\Desktop&gt; <span style="color:#f9f1a5">ls</span> .\Aralez.exe


    Directory: C:\Users\user\Desktop


Mode                 LastWriteTime         Length Name
----                 -------------         ------ ----
-a----          8/1/2025   4:31 PM        8399872 Aralez.exe


PS C:\Users\user\Desktop&gt; <span style="color:#f9f1a5">Get-FileHash</span> <span style="color:#767676">-Algorithm</span> SHA1 .\Aralez.exe

Algorithm       Hash
---------       ----
SHA1            CCF5BAD56CE5D6DB6F2B4D301CFDE3BE689BF566


PS C:\Users\user\Desktop&gt; <span style="display:inline-block;width:8px;height:4px;background:#f2f2f2;vertical-align:-3px"></span></div>
<svg class="ab" style="left:0;top:0" width="1710" height="561">
<rect x="17.5" y="212.5" width="555" height="38" fill="none" stroke="#ec1c24" stroke-width="5"/>
<rect x="610.5" y="479.5" width="249" height="23" fill="none" stroke="#ec1c24" stroke-width="5"/>
<line x1="810.5" y1="186.5" x2="1062.5" y2="186.5" stroke="#ec1c24" stroke-width="5" stroke-linecap="round"/>
<line x1="1011" y1="189" x2="1207" y2="387" stroke="#ec1c24" stroke-width="5.6" stroke-linecap="round"/>
<path d="M1208.7 378.7 L1208.7 388.5 L1200.5 388.5" stroke="#ec1c24" stroke-width="5.4" fill="none" stroke-linecap="round" stroke-linejoin="round"/>
<line x1="1412.5" y1="297.5" x2="1555.5" y2="297.5" stroke="#ec1c24" stroke-width="5" stroke-linecap="round"/>
<line x1="1205.5" y1="410.5" x2="1522.5" y2="410.5" stroke="#ec1c24" stroke-width="5" stroke-linecap="round"/>
</svg>
<div class="t" style="left:866px;top:482px;font-size:20px;font-weight:bold;color:#ec1c24">File size</div>
<div class="t" style="left:1417px;top:304px;font-size:20px;font-weight:bold;color:#ec1c24">File size</div>
<div class="t" style="left:1504px;top:423px;font-size:20px;font-weight:bold;color:#ec1c24">Same SHA-1</div>
</body></html>
